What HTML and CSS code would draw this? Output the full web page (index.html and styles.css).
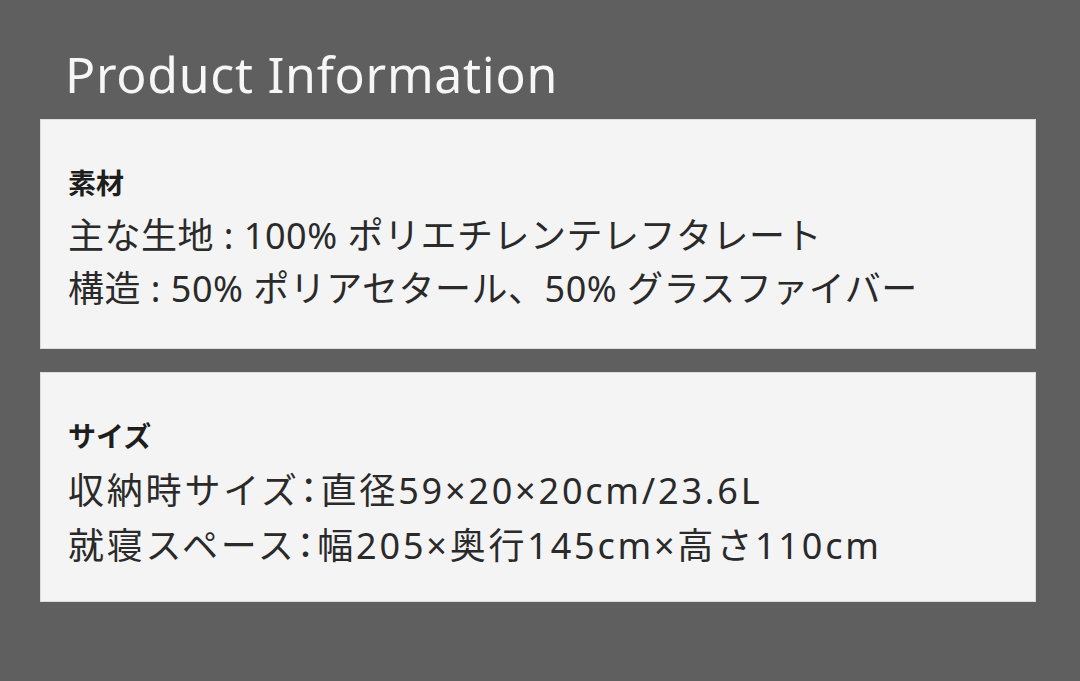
FILE: index.html
```html
<!DOCTYPE html>
<html lang="ja">
<head>
<meta charset="utf-8">
<link rel="stylesheet" href="styles.css">
</head>
<body>
<main class="page">
  <h1 class="title">Product Information</h1>
  <section class="card">
    <h2 class="card-head">素材</h2>
    <p class="line">主な生地 : 100% ポリエチレンテレフタレート</p>
    <p class="line">構造 : 50% ポリアセタール、50% グラスファイバー</p>
  </section>
  <section class="card">
    <h2 class="card-head">サイズ</h2>
    <p class="line wide">収納時サイズ<span class="half">：</span>直径59×20×20cm/23.6L</p>
    <p class="line wide">就寝スペース<span class="half">：</span>幅205×奥行145cm×高さ110cm</p>
  </section>
</main>
</body>
</html>
```

FILE: styles.css
```css
html, body {
  margin: 0;
  padding: 0;
  background: #5f5f5f;
}
body {
  width: 1080px;
  height: 681px;
  overflow: hidden;
  font-family: "Noto Sans CJK JP", "Noto Sans", sans-serif;
}
.page {
  display: flex;
  flex-direction: column;
  gap: 23px;
  padding: 0 44px 0 40px;
}
.title {
  margin: 0 0 -23px 0;
  height: 119px;
  box-sizing: border-box;
  padding: 46px 0 0 25px;
  font-family: "Noto Sans", sans-serif;
  font-weight: 400;
  font-size: 50px;
  line-height: 56px;
  color: #f6f6f6;
  letter-spacing: 0.7px;
}
.card {
  background: #f4f4f4;
  border: 1px solid #dcdcdc;
  height: 230px;
  box-sizing: border-box;
  padding: 36px 28px 0 27px;
}
.card-head {
  margin: 0;
  font-size: 28px;
  font-weight: 700;
  line-height: 53px;
  color: #1e1e1e;
}
.line {
  margin: 0;
  font-family: "Noto Sans", "Noto Sans CJK JP", sans-serif;
  font-size: 36px;
  font-weight: 400;
  line-height: 53px;
  letter-spacing: 0.5px;
  color: #2a2a2a;
}
.line.wide {
  letter-spacing: 2.8px;
}
.half {
  font-family: "Noto Sans CJK JP", sans-serif;
  font-feature-settings: "halt";
}
```
